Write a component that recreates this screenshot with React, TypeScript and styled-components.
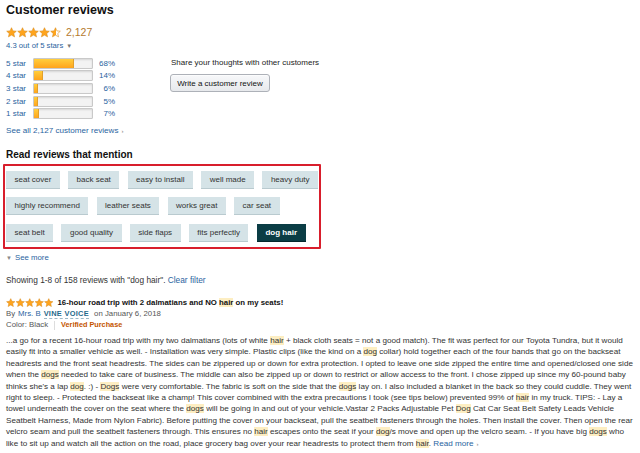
import React from "react"
import styled, { createGlobalStyle } from "styled-components"

const GlobalStyle = createGlobalStyle`
    body {
        margin: 0;
        background: #fff;
        color: #111;
        font-family: "Liberation Sans", Arial, sans-serif;
    }
`
const Page = styled.div`
    padding: 2px 6px 0 6px;
    width: 628px;
`
const Title = styled.h2`
    margin: 0;
    font-size: 12.5px;
    line-height: 16px;
    font-weight: 700;
`
const RatingRow = styled.div`
    display: flex;
    align-items: center;
    gap: 5px;
    margin-top: 7px;
    height: 14px;
`
const RatingCount = styled.span`
    font-size: 10.5px;
    color: #b57a2e;
`
const Link = styled.a`
    color: #2a64a0;
    text-decoration: none;
    cursor: pointer;
`
const SmallLink = styled(Link)`
    display: block;
    font-size: 7.7px;
    line-height: 12px;
    margin-top: 1px;
`
const Caret = styled.span`
    font-size: 6px;
    color: #777;
    margin-left: 3px;
`
const Summary = styled.div`
    display: flex;
    margin-top: 5px;
`
const Histogram = styled.div`
    width: 165px;
    display: flex;
    flex-direction: column;
`
const HistRow = styled.div`
    display: grid;
    grid-template-columns: 27px 60px 22px;
    align-items: center;
    height: 12.6px;
    font-size: 8px;
    color: #2a64a0;
`
const Pct = styled.span`
    text-align: right;
`
const Bar = styled.div`
    height: 9px;
    background: #f3f3f3;
    border: 1px solid #c9c9c9;
    border-radius: 1px;
    box-shadow: inset 0 1px 2px rgba(0, 0, 0, 0.12);
    overflow: hidden;
`
const Fill = styled.div`
    height: 100%;
    background: linear-gradient(#ffce3d, #ffa41c);
    border-right: 1px solid #e2a02a;
`
const WriteBox = styled.div`
    display: flex;
    flex-direction: column;
    align-items: flex-start;
    font-size: 8px;
    color: #222;
    line-height: 12px;
`
const WriteButton = styled.button`
    margin-top: 5px;
    margin-left: -1px;
    width: 100px;
    height: 18px;
    padding: 0;
    font-family: inherit;
    font-size: 8px;
    color: #111;
    background: linear-gradient(#f7f8fa, #e7e9ec);
    border: 1px solid #adb1b8;
    border-radius: 3px;
    box-shadow: 0 1px 0 rgba(255, 255, 255, 0.6) inset;
`
const SeeAll = styled(Link)`
    display: block;
    font-size: 8.1px;
    margin-top: 5px;
    line-height: 12px;
`
const SubTitle = styled.h3`
    margin: 11px 0 0 0;
    font-size: 10px;
    line-height: 13px;
    font-weight: 700;
`
const MentionBox = styled.div`
    display: inline-flex;
    flex-direction: column;
    gap: 8.5px;
    margin: 3px 0 0 -3px;
    padding: 5px 1px 5px 1px;
    border: 2px solid #d81e2c;
    border-radius: 1px;
`
const ChipRow = styled.div`
    display: flex;
    gap: 8.2px;
`
const Chip = styled.span<{ $active?: boolean }>`
    display: inline-flex;
    align-items: center;
    height: 18px;
    padding: 0 ${(p) => (p.$active ? "8.8px" : "8.5px")};
    font-size: 8px;
    font-weight: ${(p) => (p.$active ? 700 : 400)};
    color: ${(p) => (p.$active ? "#fff" : "#333")};
    background: ${(p) => (p.$active ? "#0b3d45" : "#d5e3e7")};
    border-bottom: 1px solid ${(p) => (p.$active ? "#06282d" : "#b9cacf")};
    box-sizing: border-box;
`
const SeeMore = styled(Link)`
    display: block;
    font-size: 7.8px;
    margin-top: 3px;
    line-height: 12px;
`
const MoreArrow = styled.span`
    color: #888;
    font-size: 6px;
    margin-right: 3px;
`
const Showing = styled.div`
    margin-top: 10px;
    font-size: 8.3px;
    color: #333;
    line-height: 12px;
`
const Review = styled.div`
    margin-top: 11px;
`
const ReviewHead = styled.div`
    display: flex;
    align-items: center;
    gap: 4px;
    height: 11px;
`
const ReviewTitle = styled.span`
    font-size: 7.8px;
    font-weight: 700;
    color: #111;
`
const Meta = styled.div`
    font-size: 7.8px;
    color: #555;
    line-height: 11.5px;
`
const Author = styled(Link)`
    margin: 0 3px;
`
const Vine = styled.span`
    color: #1f6a8c;
    font-weight: 700;
    font-size: 7.4px;
    letter-spacing: 0.3px;
    border-bottom: 1px dashed #9bb8c6;
    margin-right: 3px;
`
const Divider = styled.span`
    display: inline-block;
    width: 1px;
    height: 9px;
    background: #ddd;
    margin: 0 6px;
    vertical-align: middle;
`
const Verified = styled.span`
    color: #c45500;
    font-weight: 700;
    font-size: 7.3px;
`
const Body = styled.p`
    margin: 4px 0 0 0;
    font-size: 8.12px;
    line-height: 11.4px;
    color: #333;
`
const Mark = styled.span`
    background: #fdeec2;
`
const Rule = styled.div`
    margin-top: 3px;
    height: 1px;
    background: #e7e7e7;
`

const STAR = "M12 1.6l3.1 6.9 7.4.7-5.6 5 1.7 7.3L12 17.7l-6.6 3.8 1.7-7.3-5.6-5 7.4-.7z"

function Stars({ value, size, id }: { value: number; size: number; id: string }) {
    return (
        <svg width={size * 5} height={size} viewBox="0 0 120 24">
            <defs>
                <linearGradient id={id + "-half"}>
                    <stop offset="50%" stopColor="#ffa41c" />
                    <stop offset="50%" stopColor="#fff" />
                </linearGradient>
            </defs>
            {[0, 1, 2, 3, 4].map((i) => {
                const fill = value >= i + 1 ? "#ffa41c" : value > i ? `url(#${id}-half)` : "#fff"
                return (
                    <path
                        key={i}
                        d={STAR}
                        transform={`translate(${i * 24} 0)`}
                        fill={fill}
                        stroke="#d98a1a"
                        strokeWidth="1.3"
                        strokeLinejoin="round"
                    />
                )
            })}
        </svg>
    )
}

const histogram = [
    { label: "5 star", pct: 68 },
    { label: "4 star", pct: 14 },
    { label: "3 star", pct: 6 },
    { label: "2 star", pct: 5 },
    { label: "1 star", pct: 7 },
]

const chipRows = [
    ["seat cover", "back seat", "easy to install", "well made", "heavy duty"],
    ["highly recommend", "leather seats", "works great", "car seat"],
    ["seat belt", "good quality", "side flaps", "fits perfectly", "dog hair"],
]

export default function App() {
    return (
        <Page>
            <GlobalStyle />
            <Title>Customer reviews</Title>
            <RatingRow>
                <Stars value={4.5} size={11} id="top" />
                <RatingCount>2,127</RatingCount>
            </RatingRow>
            <SmallLink>
                4.3 out of 5 stars<Caret>▼</Caret>
            </SmallLink>
            <Summary>
                <Histogram>
                    {histogram.map((row) => (
                        <HistRow key={row.label}>
                            <span>{row.label}</span>
                            <Bar>
                                <Fill style={{ width: `${row.pct}%` }} />
                            </Bar>
                            <Pct>{row.pct}%</Pct>
                        </HistRow>
                    ))}
                </Histogram>
                <WriteBox>
                    <span>Share your thoughts with other customers</span>
                    <WriteButton>Write a customer review</WriteButton>
                </WriteBox>
            </Summary>
            <SeeAll>
                See all 2,127 customer reviews<Caret>›</Caret>
            </SeeAll>
            <SubTitle>Read reviews that mention</SubTitle>
            <MentionBox>
                {chipRows.map((row, i) => (
                    <ChipRow key={i}>
                        {row.map((c) => (
                            <Chip key={c} $active={c === "dog hair"}>
                                {c}
                            </Chip>
                        ))}
                    </ChipRow>
                ))}
            </MentionBox>
            <SeeMore>
                <MoreArrow>▼</MoreArrow>See more
            </SeeMore>
            <Showing>
                Showing 1-8 of 158 reviews with "dog hair". <Link>Clear filter</Link>
            </Showing>
            <Review>
                <ReviewHead>
                    <Stars value={5} size={9.5} id="rev" />
                    <ReviewTitle>
                        16-hour road trip with 2 dalmatians and NO <Mark>hair</Mark> on my seats!
                    </ReviewTitle>
                </ReviewHead>
                <Meta>
                    By<Author>Mrs. B</Author>
                    <Vine>VINE VOICE</Vine> on January 6, 2018
                </Meta>
                <Meta>
                    Color: Black<Divider />
                    <Verified>Verified Purchase</Verified>
                </Meta>
                <Body>
                    ...a go for a recent 16-hour road trip with my two dalmatians (lots of white <Mark>hair</Mark> + black
                    cloth seats = not a good match). The fit was perfect for our Toyota Tundra, but it would easily fit
                    into a smaller vehicle as well. - Installation was very simple. Plastic clips (like the kind on a{" "}
                    <Mark>dog</Mark> collar) hold together each of the four bands that go on the backseat headrests and
                    the front seat headrests. The sides can be zippered up or down for extra protection. I opted to
                    leave one side zipped the entire time and opened/closed one side when the <Mark>dogs</Mark> needed
                    to take care of business. The middle can also be zipped up or down to restrict or allow access to
                    the front. I chose zipped up since my 60-pound baby thinks she's a lap <Mark>dog</Mark>. :) -{" "}
                    <Mark>Dogs</Mark> were very comfortable. The fabric is soft on the side that the <Mark>dogs</Mark>{" "}
                    lay on. I also included a blanket in the back so they could cuddle. They went right to sleep. -
                    Protected the backseat like a champ! This cover combined with the extra precautions I took (see
                    tips below) prevented 99% of <Mark>hair</Mark> in my truck. TIPS: - Lay a towel underneath the
                    cover on the seat where the <Mark>dogs</Mark> will be going in and out of your vehicle.Vastar 2
                    Packs Adjustable Pet <Mark>Dog</Mark> Cat Car Seat Belt Safety Leads Vehicle Seatbelt Harness, Made
                    from Nylon Fabric). Before putting the cover on your backseat, pull the seatbelt fasteners through
                    the holes. Then install the cover. Then open the rear velcro seam and pull the seatbelt fasteners
                    through. This ensures no <Mark>hair</Mark> escapes onto the seat if your <Mark>dog</Mark>/s move
                    and open up the velcro seam. - If you have big <Mark>dogs</Mark> who like to sit up and watch all
                    the action on the road, place grocery bag over your rear headrests to protect them from{" "}
                    <Mark>hair</Mark>. <Link>Read more</Link>
                    <Caret>›</Caret>
                </Body>
                <Rule />
            </Review>
        </Page>
    )
}
